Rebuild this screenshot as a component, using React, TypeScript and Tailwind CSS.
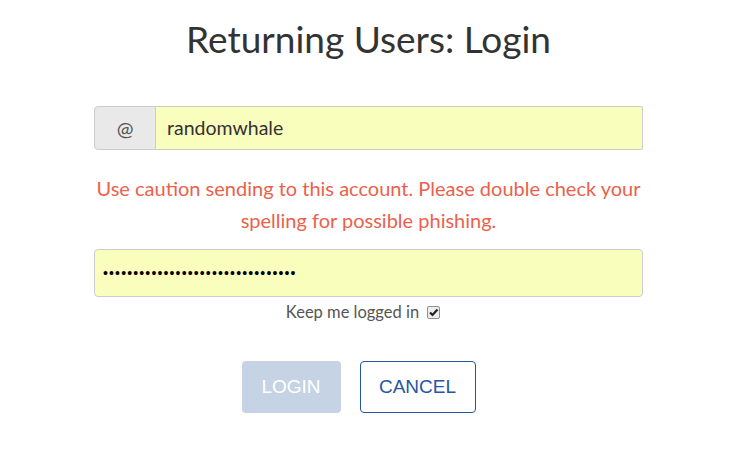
import React from "react";

export default function App() {
  return (
    <div className="w-[741px] h-[456px] bg-white flex flex-col items-center" style={{ fontFamily: "Lato, 'Open Sans', sans-serif" }}>
      <h1 className="mt-[17px] ml-[-4px] text-[37px] leading-[44px] text-[#333333] font-normal">Returning Users: Login</h1>
      <div className="mt-[45px] w-[549px] ml-[-4px] flex flex-col">
        <div className="flex h-[44px]">
          <div className="w-[62px] flex items-center justify-center bg-[#e9e9e9] border border-[#cccccc] rounded-l-[4px] text-[#555555] text-[20px]">@</div>
          <div className="flex-1 flex items-center bg-[#fafebd] border border-l-0 border-[#cccccc] rounded-r-[2px] pl-[11px] text-[19.5px] text-[#333333]">randomwhale</div>
        </div>
        <div className="mt-[22px] text-center text-[20px] leading-[32px] text-[#ec5f4c]">
          Use caution sending to this account. Please double check your spelling for possible phishing.
        </div>
        <div className="mt-[13px] h-[48px] bg-[#fafebd] border border-[#cccccc] rounded-[4px] flex items-center pl-[8px] text-[14px] text-black tracking-[1.15px]" style={{ fontFamily: "'Liberation Sans', Arial, sans-serif" }}>
          {"•".repeat(32)}
        </div>
        <div className="mt-[3px] ml-[-11px] flex items-center justify-center gap-[8px] text-[16.5px] text-[#555555]">
          <span>Keep me logged in</span>
          <span className="w-[13px] h-[13px] border border-[#8f8f8f] rounded-[2px] bg-[#eeeeee] flex items-center justify-center">
            <svg width="11" height="11" viewBox="0 0 11 11"><path d="M2 5.5 L4.5 8 L9.5 2.5" fill="none" stroke="#222" strokeWidth="2.2" /></svg>
          </span>
        </div>
      </div>
      <div className="mt-[36px] ml-[-24px] flex gap-[19px]" style={{ fontFamily: "'Liberation Sans', Arial, sans-serif" }}>
        <button className="w-[99px] h-[52px] rounded-[4px] bg-[#c6d3e5] text-white text-[19px]">LOGIN</button>
        <button className="w-[116px] h-[52px] rounded-[4px] border border-[#2456a4] bg-white text-[#2456a4] text-[19px]">CANCEL</button>
      </div>
    </div>
  );
}
